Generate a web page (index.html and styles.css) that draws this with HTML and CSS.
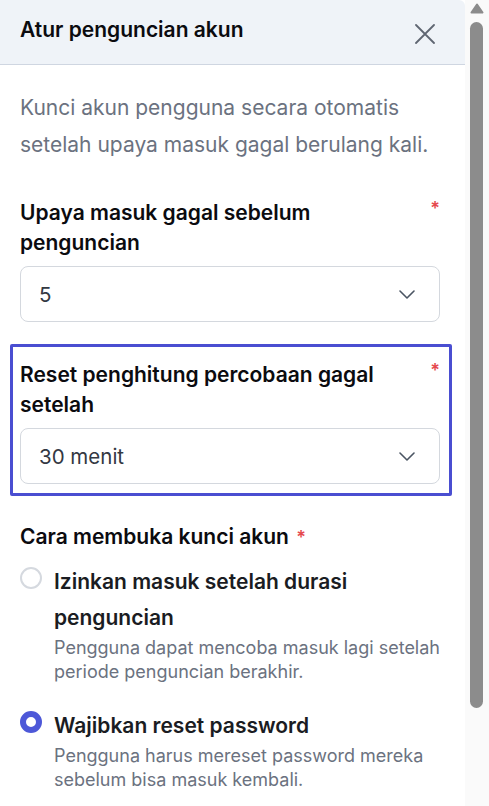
FILE: index.html
```html
<!DOCTYPE html>
<html lang="id">
<head>
<meta charset="utf-8">
<title>Atur penguncian akun</title>
<link rel="stylesheet" href="styles.css">
</head>
<body>
<div class="frame">
  <div class="drawer">
    <header class="header">
      <h1 class="title">Atur penguncian akun</h1>
      <button class="close" aria-label="Tutup">
        <svg width="20" height="20" viewBox="0 0 20 20"><path d="M1 1L19 19M19 1L1 19" stroke="#5f6672" stroke-width="1.8" stroke-linecap="round" fill="none"/></svg>
      </button>
    </header>
    <div class="body">
      <p class="intro">Kunci akun pengguna secara otomatis setelah upaya masuk gagal berulang kali.</p>

      <div class="field">
        <div class="label-row">
          <label class="label">Upaya masuk gagal sebelum penguncian</label>
          <span class="req">*</span>
        </div>
        <div class="select">
          <span class="value">5</span>
          <svg class="chev" width="16" height="9" viewBox="0 0 16 9"><path d="M1 1L8 8L15 1" stroke="#4b5563" stroke-width="1.6" fill="none" stroke-linecap="round" stroke-linejoin="round"/></svg>
        </div>
      </div>

      <div class="field focused">
        <div class="label-row">
          <label class="label">Reset penghitung percobaan gagal setelah</label>
          <span class="req">*</span>
        </div>
        <div class="select">
          <span class="value">30 menit</span>
          <svg class="chev" width="16" height="9" viewBox="0 0 16 9"><path d="M1 1L8 8L15 1" stroke="#4b5563" stroke-width="1.6" fill="none" stroke-linecap="round" stroke-linejoin="round"/></svg>
        </div>
      </div>

      <div class="group">
        <div class="label">Cara membuka kunci akun <span class="req inline">*</span></div>
        <div class="option">
          <span class="radio"></span>
          <div class="opt-text">
            <div class="opt-title">Izinkan masuk setelah durasi penguncian</div>
            <div class="opt-desc">Pengguna dapat mencoba masuk lagi setelah periode penguncian berakhir.</div>
          </div>
        </div>
        <div class="option">
          <span class="radio checked"></span>
          <div class="opt-text">
            <div class="opt-title">Wajibkan reset password</div>
            <div class="opt-desc">Pengguna harus mereset password mereka sebelum bisa masuk kembali.</div>
          </div>
        </div>
      </div>
    </div>
  </div>
  <div class="rail">
    <svg class="rail-arrow" width="14" height="11" viewBox="0 0 14 11"><path d="M1.5 9.5L7 1.5L12.5 9.5Z" fill="#8c8c8c" stroke="#8c8c8c" stroke-width="2" stroke-linejoin="round"/></svg>
    <div class="thumb"></div>
  </div>
</div>
</body>
</html>
```

FILE: styles.css
```css
* { box-sizing: border-box; }
html, body { margin: 0; padding: 0; background: #ffffff; }
body { font-family: Inter, "Noto Sans", "Liberation Sans", sans-serif; color: #111827; }

.frame {
  display: flex;
  width: 489px;
  height: 806px;
  overflow: hidden;
}

.drawer {
  width: 465px;
  flex: none;
  background: #ffffff;
}

.rail {
  width: 24px;
  flex: none;
  background: #fafafa;
  display: flex;
  flex-direction: column;
  align-items: center;
  padding: 3px 0 0 0;
}
.rail-arrow { display: block; margin-left: -1px; }
.thumb {
  margin-top: 8px;
  width: 13px;
  height: 686px;
  border-radius: 7px;
  background: #8c8c8c;
  margin-left: -1px;
}

.header {
  height: 65px;
  background: #eff3f8;
  border-bottom: 1px solid #cfd6e1;
  border-top-right-radius: 6px;
  display: flex;
  justify-content: space-between;
  align-items: flex-start;
  padding: 16px 20px 0 20px;
}
.title {
  margin: 0;
  font-size: 21px;
  line-height: 28px;
  font-weight: 600;
  color: #0b0b0f;
}
.close {
  border: 0;
  background: transparent;
  padding: 0;
  width: 40px;
  height: 40px;
  margin-top: -2px;
  display: flex;
  align-items: center;
  justify-content: center;
  cursor: pointer;
}

.body { padding: 24px 25px 0 20px; }

.intro {
  margin: 0 0 35px 0;
  font-size: 21px;
  line-height: 37px;
  color: #6b7280;
}

.label-row {
  display: flex;
  justify-content: space-between;
  align-items: flex-start;
  gap: 16px;
}
.label {
  display: block;
  font-size: 21px;
  line-height: 30px;
  font-weight: 600;
  color: #0b0b0f;
}
.req {
  color: #e5484d;
  font-size: 18px;
  line-height: 22px;
  font-weight: 600;
}
.req.inline { margin-left: 2px; font-size: 18px; }

.select {
  margin-top: 8px;
  height: 56px;
  border: 1px solid #d4d8de;
  border-radius: 8px;
  background: #fff;
  display: flex;
  align-items: center;
  justify-content: space-between;
  padding: 0 24px 0 18px;
}
.value { font-size: 20.5px; color: #333842; }

.field { margin-bottom: 22px; }

.field.focused {
  margin: 0 -12px 26px -10px;
  border: 3px solid #4a4ed1;
  border-radius: 2px;
  padding: 13px 9px 9px 7px;
}

.option {
  display: flex;
  gap: 12px;
  align-items: flex-start;
  margin-top: 12px;
}
.option + .option { margin-top: 24px; }
.radio {
  flex: none;
  width: 22px;
  height: 22px;
  border-radius: 50%;
  border: 2px solid #d5d9df;
  background: #fff;
  margin-top: 3px;
}
.radio.checked {
  border: 6.5px solid #4d58d8;
}
.opt-title {
  font-size: 21px;
  line-height: 36px;
  font-weight: 600;
  color: #1a1c22;
}
.opt-desc {
  font-size: 18px;
  line-height: 24px;
  color: #6b7280;
}
```
